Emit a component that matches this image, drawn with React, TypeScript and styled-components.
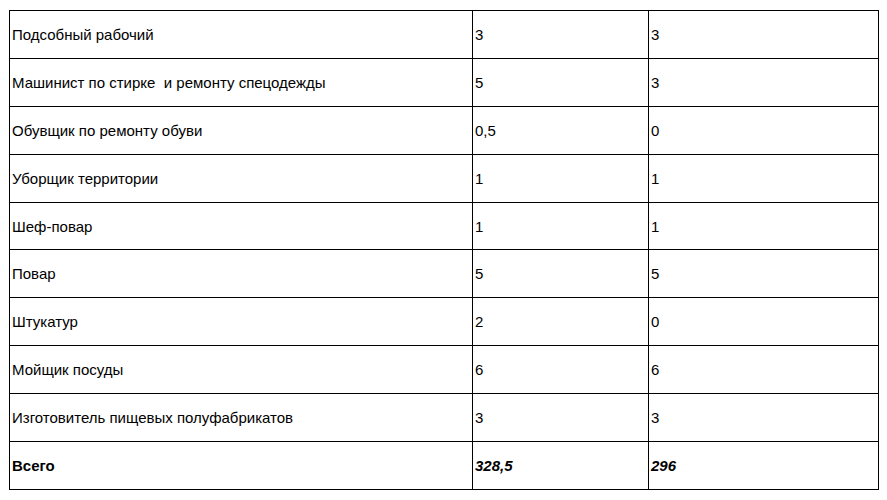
import React from 'react';
import styled, { createGlobalStyle } from 'styled-components';

const GlobalStyle = createGlobalStyle`
  html, body {
    margin: 0;
    padding: 0;
    background: #ffffff;
  }
  body {
    font-family: "Liberation Sans", Arial, sans-serif;
    color: #000000;
  }
`;

const Page = styled.div`
  padding: 10px 0 0 9px;
`;

const Table = styled.table`
  border-collapse: collapse;
  table-layout: fixed;
  width: 869px;
  font-size: 15px;
`;

const Cell = styled.td<{ bold?: boolean; italic?: boolean }>`
  border: 1px solid #000000;
  height: 46.9px;
  padding: 0 0 0 2px;
  vertical-align: middle;
  text-align: left;
  white-space: pre;
  font-weight: ${props => (props.bold ? 'bold' : 'normal')};
  font-style: ${props => (props.italic ? 'italic' : 'normal')};
`;

const rows: [string, string, string][] = [
  ['Подсобный рабочий', '3', '3'],
  ['Машинист по стирке  и ремонту спецодежды', '5', '3'],
  ['Обувщик по ремонту обуви', '0,5', '0'],
  ['Уборщик территории', '1', '1'],
  ['Шеф-повар', '1', '1'],
  ['Повар', '5', '5'],
  ['Штукатур', '2', '0'],
  ['Мойщик посуды', '6', '6'],
  ['Изготовитель пищевых полуфабрикатов', '3', '3'],
];

const App: React.FC = () => {
  return (
    <>
      <GlobalStyle />
      <Page>
        <Table>
          <colgroup>
            <col style={{ width: 463 }} />
            <col style={{ width: 176 }} />
            <col style={{ width: 230 }} />
          </colgroup>
          <tbody>
            {rows.map(([name, plan, fact]) => (
              <tr key={name}>
                <Cell>{name}</Cell>
                <Cell>{plan}</Cell>
                <Cell>{fact}</Cell>
              </tr>
            ))}
            <tr>
              <Cell bold>Всего</Cell>
              <Cell bold italic>328,5</Cell>
              <Cell bold italic>296</Cell>
            </tr>
          </tbody>
        </Table>
      </Page>
    </>
  );
};

export default App;
